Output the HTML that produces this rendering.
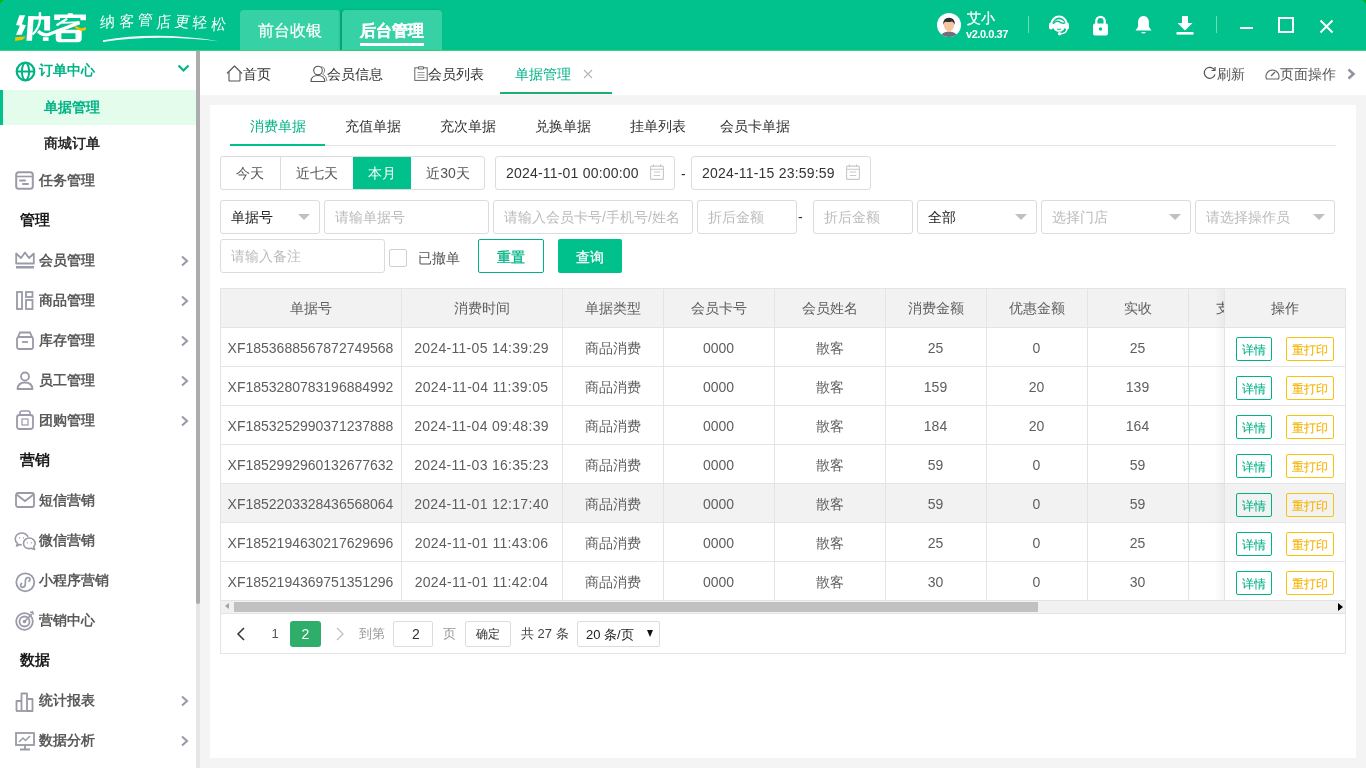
<!DOCTYPE html>
<html><head><meta charset="utf-8">
<style>
*{box-sizing:border-box;margin:0;padding:0}
html,body{width:1366px;height:768px;overflow:hidden;background:#f4f4f4;font-family:"Liberation Sans",sans-serif;font-size:14px;color:#333}
.abs{position:absolute}
#hdr{position:absolute;left:0;top:0;width:1366px;height:51px;background:#01c18c;border-bottom:1px solid #3fd27a}
.htab{position:absolute;top:10px;height:40px;background:#36d1a5;border-radius:4px 4px 0 0;color:#fff;font-size:16px;text-align:center;line-height:42px}
#side{position:absolute;left:0;top:51px;width:196px;height:717px;background:#fff}
#sbar{position:absolute;left:196px;top:51px;width:4px;height:553px;background:#acacac;border-radius:0 0 2px 2px}
#sbtrack{position:absolute;left:196px;top:51px;width:4px;height:717px;background:#e6e6e6}
.mi{position:absolute;left:0;width:196px;height:35px}
.mi .t{position:absolute;left:39px;font-size:14px;color:#555;font-weight:bold;white-space:nowrap}
.mi svg{position:absolute}
.sec{position:absolute;left:20px;font-size:15px;color:#222;font-weight:bold}
.arr{position:absolute;left:180px}
#tabbar{position:absolute;left:200px;top:51px;width:1166px;height:44px;background:#fff}
.tb{position:absolute;top:15px;font-size:14px;color:#333;white-space:nowrap}
#card{position:absolute;left:210px;top:105px;width:1146px;height:653px;background:#fff}
.st{position:absolute;top:14px;font-size:14px;color:#333;white-space:nowrap}
.inp{position:absolute;height:34px;border:1px solid #dcdcdc;border-radius:3px;background:#fff;font-size:14px;line-height:32px;padding-left:10px;color:#bbb;white-space:nowrap;overflow:hidden}
.tri{position:absolute;width:0;height:0;border-left:6px solid transparent;border-right:6px solid transparent;border-top:6px solid #c0c0c0}
</style></head><body><div style="position:absolute;left:0;top:0;width:1366px;height:768px;will-change:transform">
<div id="hdr">
  <svg class="abs" style="left:0;top:0" width="5" height="5"><path d="M0 0 H4 Q1 1 0 4Z" fill="#00b400"/></svg>
  <svg class="abs" style="left:1361px;top:0" width="5" height="5"><path d="M5 0 H1 Q4 1 5 4Z" fill="#00b400"/></svg>
    <svg class="abs" style="left:0;top:0" width="95" height="50" viewBox="0 0 95 50">
<g fill="#fff">
<path d="M19.4 15.2 L25.1 15.2 L21.9 24.3 L25.9 25.3 L21.7 34.7 L16 34.7 L19.9 25.8 L16 25.1 Z"/>
<path d="M28.3 16.2 L33.8 16.2 L32 40.7 L26.4 40.7 Z"/>
<path d="M28.3 16.2 H50.1 V19.6 H28.3 Z"/>
<path d="M44.2 16.2 H50.1 V30.5 H44.2 Z"/>
<path d="M38.7 12.2 H41.2 V19.6 H38.7 Z"/>
<path d="M42.9 37.2 H48.6 V40.9 H42.9 Z"/>
<path d="M54.2 14.4 H85.9 V20.3 H80.4 V17.9 H59.9 V20.1 H54.2 Z"/>
<path d="M67.8 13.2 H72.8 V15 H67.8 Z"/>
<path fill-rule="evenodd" d="M55.7 29.8 H81.7 V38.5 Q81.7 42.2 78 42.2 H59.4 Q55.7 42.2 55.7 38.5 Z M61.4 33.2 V38.9 H75.5 V33.2 Z"/>
</g>
<g stroke="#fff" fill="none">
<path d="M40 19.5 Q39.5 28 32.5 34.5" stroke-width="2.3"/>
<path d="M38.2 31.2 Q43.5 37 50.5 33.8 L79.5 22.6" stroke-width="3.3"/>
<path d="M57.4 24.8 L66.4 19.3" stroke-width="2.3" stroke-linecap="round"/>
<path d="M62 22.8 L79.5 22.2" stroke-width="1.8"/>
</g>
<path d="M15.2 37.3 L25.4 36.4 Q24.5 39.6 19.5 40.3 L15.2 40.9 Z" fill="#f7c000"/>
<path d="M73.7 26.5 Q77 25.6 80 28 Q83 28.6 85.9 27 V29.8 Q84 31.2 80.5 30.8 Q77 30 73.7 26.5Z" fill="#f7c000"/>
</svg>
  <div class="abs" style="left:100px;top:13px;width:16px;font-family:'Liberation Serif',serif;font-size:15px;line-height:18px;color:#fff;font-weight:300;transform:rotate(-8deg) skewX(-8deg)">纳</div><div class="abs" style="left:119px;top:12px;width:16px;font-family:'Liberation Serif',serif;font-size:15px;line-height:18px;color:#fff;font-weight:300;transform:rotate(-4deg) skewX(-8deg)">客</div><div class="abs" style="left:138px;top:11px;width:16px;font-family:'Liberation Serif',serif;font-size:15px;line-height:18px;color:#fff;font-weight:300;transform:rotate(0deg) skewX(-8deg)">管</div><div class="abs" style="left:156px;top:13px;width:16px;font-family:'Liberation Serif',serif;font-size:15px;line-height:18px;color:#fff;font-weight:300;transform:rotate(-6deg) skewX(-8deg)">店</div><div class="abs" style="left:175px;top:13px;width:16px;font-family:'Liberation Serif',serif;font-size:15px;line-height:18px;color:#fff;font-weight:300;transform:rotate(4deg) skewX(-8deg)">更</div><div class="abs" style="left:192px;top:14px;width:16px;font-family:'Liberation Serif',serif;font-size:15px;line-height:18px;color:#fff;font-weight:300;transform:rotate(-3deg) skewX(-8deg)">轻</div><div class="abs" style="left:211px;top:15px;width:16px;font-family:'Liberation Serif',serif;font-size:15px;line-height:18px;color:#fff;font-weight:300;transform:rotate(-5deg) skewX(-8deg)">松</div>
  <svg class="abs" style="left:0;top:0" width="230" height="48" viewBox="0 0 230 48"><path d="M103 40.2 Q158 30.8 219 41.3 Q158 33.8 103 41.9 Z" fill="#f2fffa"/></svg>
  <div class="htab" style="left:240px;width:100px;-webkit-text-stroke:0.2px #fff">前台收银</div>
  <div class="htab" style="left:342px;width:100px;font-weight:bold;box-shadow:-2px 0 2px rgba(0,60,40,0.25);-webkit-text-stroke:0.3px #fff">后台管理<div class="abs" style="left:18px;top:33px;width:64px;height:3px;background:#fff"></div></div>
  <svg class="abs" style="left:937px;top:13px" width="24" height="24" viewBox="0 0 24 24"><defs><clipPath id="avc"><circle cx="12" cy="12" r="12"/></clipPath></defs><circle cx="12" cy="12" r="12" fill="#fff"/><g clip-path="url(#avc)"><path d="M3 25 Q4 19 12 18.5 Q20 19 21 25Z" fill="#6f6f80"/><rect x="10" y="15" width="4" height="4" fill="#f0c29a"/><ellipse cx="12" cy="12" rx="5.2" ry="6" fill="#f3c6a0"/><path d="M6.3 12 Q5.5 5 12 4.8 Q18.5 5 17.7 12 Q17 9 15 8.5 Q12 9.5 8 8.8 Q6.8 10 6.3 12Z" fill="#2f3033"/></g></svg>
  <div class="abs" style="left:967px;top:9px;font-size:14px;color:#fff;line-height:18px;-webkit-text-stroke:0.3px #fff">艾小</div>
  <div class="abs" style="left:966px;top:28px;font-size:11px;color:#fff;font-weight:bold;line-height:13px;letter-spacing:-0.45px">v2.0.0.37</div>
  <div class="abs" style="left:1028px;top:16px;width:1px;height:17px;background:#6fdcb8"></div>
  <svg class="abs" style="left:1048px;top:13px" width="22" height="23" viewBox="0 0 22 23"><path d="M3.5 11 A7.5 7.5 0 0 1 18.5 11" stroke="#fff" stroke-width="2" fill="none"/><rect x="1" y="9.5" width="4" height="7" rx="2" fill="#fff"/><rect x="17" y="9.5" width="4" height="7" rx="2" fill="#fff"/><circle cx="11" cy="12.5" r="6.3" fill="#fff"/><path d="M5.2 11 Q7 7.5 11 8.5 Q13 10.5 16.8 10.2" stroke="#01c18c" stroke-width="1.3" fill="none"/><path d="M9 16 Q11 17 13 16" stroke="#01c18c" stroke-width="1" fill="none"/><path d="M19 16 Q18.5 20.5 12.5 20.8" stroke="#fff" stroke-width="1.5" fill="none"/><circle cx="11.5" cy="20.8" r="1.7" fill="#fff"/></svg>
  <svg class="abs" style="left:1092px;top:15px" width="17" height="21" viewBox="0 0 17 21"><path d="M4.3 9 V6 A4.2 4.2 0 0 1 12.7 6 V9" stroke="#fff" stroke-width="2.3" fill="none"/><rect x="1" y="8.5" width="15" height="12" rx="2" fill="#fff"/><circle cx="8.5" cy="14" r="1.7" fill="#01c18c"/></svg>
  <svg class="abs" style="left:1135px;top:15px" width="17" height="20" viewBox="0 0 17 20"><path d="M8.5 1 C4 1 3 5 3 8 V12 L0.5 15.5 H16.5 L14 12 V8 C14 5 13 1 8.5 1Z" fill="#fff"/><path d="M6 17 Q8.5 20 11 17" fill="#fff"/></svg>
  <svg class="abs" style="left:1176px;top:16px" width="18" height="19" viewBox="0 0 18 19"><path d="M6 0 H12 V7 H16.5 L9 14.5 L1.5 7 H6Z" fill="#fff"/><rect x="0.5" y="16" width="17" height="2.6" fill="#fff"/></svg>
  <div class="abs" style="left:1216px;top:16px;width:1px;height:17px;background:#6fdcb8"></div>
  <div class="abs" style="left:1240px;top:27px;width:13px;height:2px;background:#fff"></div>
  <div class="abs" style="left:1278px;top:17px;width:16px;height:16px;border:2px solid #fff"></div>
  <svg class="abs" style="left:1319px;top:19px" width="15" height="15" viewBox="0 0 15 15"><path d="M1.5 1.5 L13.5 13.5 M13.5 1.5 L1.5 13.5" stroke="#fff" stroke-width="2"/></svg>
</div>
<div id="side"><svg class="abs" style="left:15px;top:10px" width="21" height="21" viewBox="0 0 21 21"><circle cx="10.5" cy="10.5" r="8.8" stroke="#00b386" stroke-width="2.2" fill="none"/><ellipse cx="10.5" cy="10.5" rx="3.6" ry="8.8" stroke="#00b386" stroke-width="2" fill="none"/><path d="M2 10.5 H19" stroke="#00b386" stroke-width="2"/></svg>
<div class="abs" style="left:39px;top:9px;font-size:14px;font-weight:bold;color:#00b386;line-height:20px">订单中心</div>
<svg class="abs" style="left:177px;top:13px" width="13" height="9" viewBox="0 0 13 9"><path d="M1.5 1.5 L6.5 6.5 L11.5 1.5" stroke="#00b386" stroke-width="2.2" fill="none"/></svg>
<div class="abs" style="left:0;top:39px;width:196px;height:35px;background:#e3fceb"><div class="abs" style="left:0;top:0;width:3px;height:35px;background:#00c18c"></div><div class="abs" style="left:44px;top:7px;font-size:14px;font-weight:bold;color:#00b386;line-height:20px">单据管理</div></div>
<div class="abs" style="left:44px;top:82px;font-size:14px;font-weight:bold;color:#2a2a2a;line-height:20px">商城订单</div>
<div class="abs" style="left:0;top:115px;width:196px;height:30px"><svg class="abs" style="left:15px;top:5px" width="19" height="19" viewBox="0 0 19 19"><rect x="1.2" y="1.2" width="16.6" height="16.6" rx="2.5" stroke="#9a9aa8" stroke-width="2" fill="none"/><path d="M1.5 5.5 H17.5" stroke="#9a9aa8" stroke-width="1.6"/><path d="M5 9.5 H10 M8 13 H13" stroke="#9a9aa8" stroke-width="2" stroke-linecap="round"/></svg><div class="abs" style="left:39px;top:4px;font-size:14px;font-weight:bold;color:#5a5a5a;line-height:20px">任务管理</div></div>
<div class="abs" style="left:20px;top:159px;font-size:15px;font-weight:bold;color:#1a1a1a;line-height:20px">管理</div>
<div class="abs" style="left:0;top:195px;width:196px;height:30px"><svg class="abs" style="left:15px;top:5px" width="20" height="18" viewBox="0 0 20 18"><path d="M1.2 12.5 V2.5 L6 7 L10 1.5 L14 7 L18.8 2.5 V12.5Z" stroke="#9a9aa8" stroke-width="1.8" fill="none" stroke-linejoin="round"/><rect x="1" y="15" width="18" height="2.5" fill="#9a9aa8"/></svg><div class="abs" style="left:39px;top:4px;font-size:14px;font-weight:bold;color:#5a5a5a;line-height:20px">会员管理</div><svg class="abs" style="left:179px;top:9px" width="10" height="12" viewBox="0 0 10 12"><path d="M3 1.5 L8 6 L3 10.5" stroke="#9a9aa8" stroke-width="2.1" fill="none"/></svg></div>
<div class="abs" style="left:0;top:235px;width:196px;height:30px"><svg class="abs" style="left:16px;top:5px" width="18" height="19" viewBox="0 0 18 19"><rect x="1" y="1" width="5" height="17" stroke="#9a9aa8" stroke-width="1.8" fill="none"/><rect x="10" y="1" width="6.5" height="5" stroke="#9a9aa8" stroke-width="1.8" fill="none"/><rect x="10" y="9" width="6.5" height="9" stroke="#9a9aa8" stroke-width="1.8" fill="none"/></svg><div class="abs" style="left:39px;top:4px;font-size:14px;font-weight:bold;color:#5a5a5a;line-height:20px">商品管理</div><svg class="abs" style="left:179px;top:9px" width="10" height="12" viewBox="0 0 10 12"><path d="M3 1.5 L8 6 L3 10.5" stroke="#9a9aa8" stroke-width="2.1" fill="none"/></svg></div>
<div class="abs" style="left:0;top:275px;width:196px;height:30px"><svg class="abs" style="left:16px;top:5px" width="18" height="19" viewBox="0 0 18 19"><path d="M2 6 L4 1.5 H14 L16 6" stroke="#9a9aa8" stroke-width="1.8" fill="none"/><rect x="1" y="6" width="16" height="12" rx="2" stroke="#9a9aa8" stroke-width="1.8" fill="none"/><path d="M6 11 H12" stroke="#9a9aa8" stroke-width="1.8"/></svg><div class="abs" style="left:39px;top:4px;font-size:14px;font-weight:bold;color:#5a5a5a;line-height:20px">库存管理</div><svg class="abs" style="left:179px;top:9px" width="10" height="12" viewBox="0 0 10 12"><path d="M3 1.5 L8 6 L3 10.5" stroke="#9a9aa8" stroke-width="2.1" fill="none"/></svg></div>
<div class="abs" style="left:0;top:315px;width:196px;height:30px"><svg class="abs" style="left:16px;top:5px" width="18" height="19" viewBox="0 0 18 19"><circle cx="9" cy="5.5" r="4" stroke="#9a9aa8" stroke-width="1.8" fill="none"/><path d="M1.5 18 Q2 11.5 9 11.5 Q16 11.5 16.5 18Z" stroke="#9a9aa8" stroke-width="1.8" fill="none" stroke-linejoin="round"/></svg><div class="abs" style="left:39px;top:4px;font-size:14px;font-weight:bold;color:#5a5a5a;line-height:20px">员工管理</div><svg class="abs" style="left:179px;top:9px" width="10" height="12" viewBox="0 0 10 12"><path d="M3 1.5 L8 6 L3 10.5" stroke="#9a9aa8" stroke-width="2.1" fill="none"/></svg></div>
<div class="abs" style="left:0;top:355px;width:196px;height:30px"><svg class="abs" style="left:16px;top:4px" width="18" height="20" viewBox="0 0 18 20"><path d="M4 5 V3 Q4 1 6 1 H12 Q14 1 14 3 V5" stroke="#9a9aa8" stroke-width="1.6" fill="none"/><rect x="1" y="5" width="16" height="14" rx="2.5" stroke="#9a9aa8" stroke-width="1.8" fill="none"/><rect x="6" y="9" width="6" height="6" stroke="#9a9aa8" stroke-width="1.2" fill="none"/></svg><div class="abs" style="left:39px;top:4px;font-size:14px;font-weight:bold;color:#5a5a5a;line-height:20px">团购管理</div><svg class="abs" style="left:179px;top:9px" width="10" height="12" viewBox="0 0 10 12"><path d="M3 1.5 L8 6 L3 10.5" stroke="#9a9aa8" stroke-width="2.1" fill="none"/></svg></div>
<div class="abs" style="left:20px;top:399px;font-size:15px;font-weight:bold;color:#1a1a1a;line-height:20px">营销</div>
<div class="abs" style="left:0;top:435px;width:196px;height:30px"><svg class="abs" style="left:15px;top:6px" width="20" height="16" viewBox="0 0 20 16"><rect x="1" y="1" width="18" height="14" rx="2" stroke="#9a9aa8" stroke-width="1.8" fill="none"/><path d="M1.5 2.5 L10 9 L18.5 2.5" stroke="#9a9aa8" stroke-width="1.8" fill="none"/></svg><div class="abs" style="left:39px;top:4px;font-size:14px;font-weight:bold;color:#5a5a5a;line-height:20px">短信营销</div></div>
<div class="abs" style="left:0;top:475px;width:196px;height:30px"><svg class="abs" style="left:14px;top:4px" width="23" height="22" viewBox="0 0 23 22"><path d="M14 7 C13 4.5 10.5 3 7.5 3 C4 3 1.2 5.6 1.2 9 C1.2 11 2.2 12.5 3.6 13.6 L2.5 16 L5.8 14.6 C6.4 14.8 7 14.9 7.8 15" stroke="#9a9aa8" stroke-width="1.6" fill="none" stroke-linejoin="round"/><path d="M15.3 8 C12 8 9.5 10.4 9.5 13.3 C9.5 16.3 12 18.6 15.3 18.6 C16 18.6 16.7 18.5 17.3 18.3 L20.6 19.5 L19.6 16.8 C20.6 15.9 21.2 14.7 21.2 13.3 C21.2 10.4 18.6 8 15.3 8Z" stroke="#9a9aa8" stroke-width="1.6" fill="#fff" stroke-linejoin="round"/><path d="M12.8 12.8 H13.8 M16.8 12.8 H17.8 M5 7.8 H6 M9 7.8 H10" stroke="#9a9aa8" stroke-width="1.2"/></svg><div class="abs" style="left:39px;top:4px;font-size:14px;font-weight:bold;color:#5a5a5a;line-height:20px">微信营销</div></div>
<div class="abs" style="left:0;top:515px;width:196px;height:30px"><svg class="abs" style="left:15px;top:6px" width="21" height="21" viewBox="0 0 21 21"><circle cx="10.3" cy="10.3" r="9" stroke="#9a9aa8" stroke-width="1.8" fill="none"/><path d="M6.5 11.5 C4.8 12.8 5.5 15.5 7.8 15.3 C9.5 15.1 10.2 13.8 10.3 12 L10.4 8.8 C10.5 7 11.3 5.6 13 5.5 C15.2 5.4 15.8 8 14 9.3" stroke="#9a9aa8" stroke-width="1.7" fill="none" stroke-linecap="round"/></svg><div class="abs" style="left:39px;top:4px;font-size:14px;font-weight:bold;color:#5a5a5a;line-height:20px">小程序营销</div></div>
<div class="abs" style="left:0;top:555px;width:196px;height:30px"><svg class="abs" style="left:15px;top:5px" width="20" height="20" viewBox="0 0 20 20"><circle cx="9.5" cy="10.5" r="8.3" stroke="#9a9aa8" stroke-width="1.8" fill="none"/><circle cx="9.5" cy="10.5" r="5" stroke="#9a9aa8" stroke-width="1.8" fill="none"/><circle cx="9.5" cy="10.5" r="1.8" fill="#9a9aa8"/><path d="M9.5 10.5 L17 3 M15 1.5 L17.5 1 L18.5 3.5" stroke="#9a9aa8" stroke-width="1.6" fill="none"/></svg><div class="abs" style="left:39px;top:4px;font-size:14px;font-weight:bold;color:#5a5a5a;line-height:20px">营销中心</div></div>
<div class="abs" style="left:20px;top:599px;font-size:15px;font-weight:bold;color:#1a1a1a;line-height:20px">数据</div>
<div class="abs" style="left:0;top:635px;width:196px;height:30px"><svg class="abs" style="left:15px;top:6px" width="20" height="20" viewBox="0 0 20 20"><path d="M1.5 19 V9 H6.5 V19 M6.5 19 V1.5 H12 V19 M12 19 V7 H17.5 V19 Z" stroke="#9a9aa8" stroke-width="1.8" fill="none" stroke-linejoin="round"/><path d="M1 19 H18" stroke="#9a9aa8" stroke-width="1.8"/></svg><div class="abs" style="left:39px;top:4px;font-size:14px;font-weight:bold;color:#5a5a5a;line-height:20px">统计报表</div><svg class="abs" style="left:179px;top:9px" width="10" height="12" viewBox="0 0 10 12"><path d="M3 1.5 L8 6 L3 10.5" stroke="#9a9aa8" stroke-width="2.1" fill="none"/></svg></div>
<div class="abs" style="left:0;top:675px;width:196px;height:30px"><svg class="abs" style="left:15px;top:6px" width="20" height="19" viewBox="0 0 20 19"><rect x="1" y="1" width="18" height="12" stroke="#9a9aa8" stroke-width="1.8" fill="none"/><path d="M4 10 L8 6 L10.5 8.5 L15 4" stroke="#9a9aa8" stroke-width="1.5" fill="none"/><path d="M10 13 V17 M5 17.5 H15" stroke="#9a9aa8" stroke-width="1.8"/></svg><div class="abs" style="left:39px;top:4px;font-size:14px;font-weight:bold;color:#5a5a5a;line-height:20px">数据分析</div><svg class="abs" style="left:179px;top:9px" width="10" height="12" viewBox="0 0 10 12"><path d="M3 1.5 L8 6 L3 10.5" stroke="#9a9aa8" stroke-width="2.1" fill="none"/></svg></div></div>
<div id="sbtrack"></div>
<div id="sbar"></div>
<div id="tabbar">
  <svg class="abs" style="left:26px;top:14px" width="17" height="17" viewBox="0 0 17 17"><path d="M1 8.5 L8.5 1 L16 8.5" stroke="#555" stroke-width="1.1" fill="none" stroke-linejoin="round"/><path d="M3 7 V15.5 Q3 16 3.5 16 H13.5 Q14 16 14 15.5 V7" stroke="#555" stroke-width="1.1" fill="none"/></svg>
  <div class="tb" style="left:43px">首页</div>
  <svg class="abs" style="left:110px;top:14px" width="18" height="17" viewBox="0 0 18 17"><path d="M11.5 1.5 A4 4 0 0 1 12.5 9 Q16.5 10.5 17 16" stroke="#888" stroke-width="1" fill="none"/><circle cx="8" cy="5.5" r="4.3" stroke="#555" stroke-width="1.1" fill="#fff"/><path d="M1 16.5 Q1 10.5 8 10.5 Q14.5 10.5 14.8 16.5Z" stroke="#555" stroke-width="1.1" fill="none" stroke-linejoin="round"/></svg>
  <div class="tb" style="left:127px">会员信息</div>
  <svg class="abs" style="left:214px;top:15px" width="14" height="15" viewBox="0 0 14 15"><rect x="0.8" y="1.8" width="12.4" height="12.6" stroke="#666" stroke-width="1" fill="none"/><path d="M4.5 0.8 H9.5 V3 H4.5Z" stroke="#666" stroke-width="1" fill="#fff"/><path d="M3.5 6.5 H10.5 M3.5 9 H10.5 M3.5 11.5 H10.5" stroke="#999" stroke-width="1"/></svg>
  <div class="tb" style="left:228px">会员列表</div>
  <div class="tb" style="left:315px;color:#00b386">单据管理</div>
  <svg class="abs" style="left:383px;top:18px" width="10" height="10" viewBox="0 0 10 10"><path d="M1 1 L9 9 M9 1 L1 9" stroke="#b5b5b5" stroke-width="1.1"/></svg>
  <div class="abs" style="left:300px;top:41px;width:112px;height:2px;background:#1cb26e"></div>
  <svg class="abs" style="left:1003px;top:15px" width="14" height="14" viewBox="0 0 14 14"><path d="M11.5 4 A5.5 5.5 0 1 0 12 8.5" stroke="#555" stroke-width="1.2" fill="none"/><path d="M12 1 V4.5 H8.5" stroke="#555" stroke-width="1.2" fill="none"/></svg>
  <div class="tb" style="left:1017px;color:#555">刷新</div>
  <svg class="abs" style="left:1065px;top:16px" width="15" height="13" viewBox="0 0 15 13"><path d="M1.5 12 A6.5 6.5 0 1 1 13.5 12Z" stroke="#666" stroke-width="1.1" fill="none"/><path d="M6 9 L10 5" stroke="#666" stroke-width="1.2"/></svg>
  <div class="tb" style="left:1080px;color:#555">页面操作</div>
  <svg class="abs" style="left:1146px;top:17px" width="10" height="12" viewBox="0 0 10 12"><path d="M2.5 1.5 L7.5 6 L2.5 10.5" stroke="#9090a0" stroke-width="2.5" fill="none"/></svg>
</div>
<div id="card"></div>
<div class="abs" style="left:250px;top:116px;font-size:14px;line-height:20px;color:#00b386;white-space:nowrap">消费单据</div>
<div class="abs" style="left:345px;top:116px;font-size:14px;line-height:20px;color:#333;white-space:nowrap">充值单据</div>
<div class="abs" style="left:440px;top:116px;font-size:14px;line-height:20px;color:#333;white-space:nowrap">充次单据</div>
<div class="abs" style="left:535px;top:116px;font-size:14px;line-height:20px;color:#333;white-space:nowrap">兑换单据</div>
<div class="abs" style="left:630px;top:116px;font-size:14px;line-height:20px;color:#333;white-space:nowrap">挂单列表</div>
<div class="abs" style="left:720px;top:116px;font-size:14px;line-height:20px;color:#333;white-space:nowrap">会员卡单据</div>
<div class="abs" style="left:230px;top:145px;width:1106px;height:1px;background:#e4e4e4"></div>
<div class="abs" style="left:230px;top:144px;width:95px;height:2px;background:#00c18c"></div>
<div class="abs" style="left:220px;top:156px;width:265px;height:34px;border:1px solid #dcdcdc;border-radius:3px;background:#fff"></div>
<div class="abs" style="left:280px;top:157px;width:1px;height:32px;background:#dcdcdc"></div>
<div class="abs" style="left:353px;top:157px;width:58px;height:32px;background:#00c18c"></div>
<div class="abs" style="left:220px;top:163px;width:60px;text-align:center;font-size:14px;line-height:20px;color:#555">今天</div>
<div class="abs" style="left:280px;top:163px;width:73px;text-align:center;font-size:14px;line-height:20px;color:#555">近七天</div>
<div class="abs" style="left:353px;top:163px;width:58px;text-align:center;font-size:14px;line-height:20px;color:#fff">本月</div>
<div class="abs" style="left:411px;top:163px;width:74px;text-align:center;font-size:14px;line-height:20px;color:#555">近30天</div>
<div class="inp" style="left:495px;top:156px;width:180px;color:#333;letter-spacing:0.2px">2024-11-01 00:00:00</div><svg class="abs" style="left:650px;top:164px" width="15" height="16" viewBox="0 0 15 16"><rect x="0.6" y="2.1" width="12.8" height="13.3" rx="1" stroke="#c8c8c8" stroke-width="1.1" fill="none"/><path d="M0.6 5.3 H13.4 M3.8 8 H10.2 M3.8 11.5 H10.2 M3.5 0.3 V3 M10.5 0.3 V3" stroke="#c8c8c8" stroke-width="1"/></svg>
<div class="abs" style="left:681px;top:164px;font-size:14px;line-height:20px;color:#333">-</div>
<div class="inp" style="left:691px;top:156px;width:180px;color:#333;letter-spacing:0.2px">2024-11-15 23:59:59</div><svg class="abs" style="left:846px;top:164px" width="15" height="16" viewBox="0 0 15 16"><rect x="0.6" y="2.1" width="12.8" height="13.3" rx="1" stroke="#c8c8c8" stroke-width="1.1" fill="none"/><path d="M0.6 5.3 H13.4 M3.8 8 H10.2 M3.8 11.5 H10.2 M3.5 0.3 V3 M10.5 0.3 V3" stroke="#c8c8c8" stroke-width="1"/></svg>
<div class="inp" style="left:220px;top:200px;width:100px;color:#222">单据号</div><div class="tri" style="left:298px;top:214px"></div>
<div class="inp" style="left:324px;top:200px;width:165px">请输单据号</div>
<div class="inp" style="left:493px;top:200px;width:200px">请输入会员卡号/手机号/姓名</div>
<div class="inp" style="left:697px;top:200px;width:100px">折后金额</div>
<div class="abs" style="left:798px;top:207px;font-size:14px;line-height:20px;color:#333">-</div>
<div class="inp" style="left:813px;top:200px;width:100px">折后金额</div>
<div class="inp" style="left:917px;top:200px;width:120px;color:#222">全部</div><div class="tri" style="left:1015px;top:214px"></div>
<div class="inp" style="left:1041px;top:200px;width:150px">选择门店</div><div class="tri" style="left:1169px;top:214px"></div>
<div class="inp" style="left:1195px;top:200px;width:140px">请选择操作员</div><div class="tri" style="left:1313px;top:214px"></div>
<div class="inp" style="left:220px;top:239px;width:165px">请输入备注</div>
<div class="abs" style="left:389px;top:249px;width:18px;height:18px;border:1px solid #d0d0d0;border-radius:2px;background:#fff"></div>
<div class="abs" style="left:418px;top:248px;font-size:14px;line-height:20px;color:#555">已撤单</div>
<div class="abs" style="left:478px;top:239px;width:66px;height:34px;border:1px solid #00b386;border-radius:2px;color:#00b386;font-size:14px;line-height:35px;text-align:center;-webkit-text-stroke:0.3px #00b386">重置</div>
<div class="abs" style="left:558px;top:239px;width:64px;height:34px;background:#00c18c;border-radius:2px;color:#fff;font-size:14px;line-height:36px;text-align:center;-webkit-text-stroke:0.3px #fff">查询</div>
<div class="abs" style="left:220px;top:288px;width:1126px;height:366px;border:1px solid #e4e4e4;background:#fff"></div>
<div class="abs" style="left:221px;top:289px;width:1124px;height:38px;background:#f2f2f2"></div>
<div class="abs" style="left:221px;top:484px;width:1124px;height:38px;background:#f2f2f2"></div>
<div class="abs" style="left:220px;top:327px;width:1125px;height:1px;background:#e4e4e4"></div>
<div class="abs" style="left:220px;top:366px;width:1125px;height:1px;background:#e4e4e4"></div>
<div class="abs" style="left:220px;top:405px;width:1125px;height:1px;background:#e4e4e4"></div>
<div class="abs" style="left:220px;top:444px;width:1125px;height:1px;background:#e4e4e4"></div>
<div class="abs" style="left:220px;top:483px;width:1125px;height:1px;background:#e4e4e4"></div>
<div class="abs" style="left:220px;top:522px;width:1125px;height:1px;background:#e4e4e4"></div>
<div class="abs" style="left:220px;top:561px;width:1125px;height:1px;background:#e4e4e4"></div>
<div class="abs" style="left:220px;top:600px;width:1125px;height:1px;background:#e4e4e4"></div>
<div class="abs" style="left:401px;top:288px;width:1px;height:312px;background:#e4e4e4"></div>
<div class="abs" style="left:562px;top:288px;width:1px;height:312px;background:#e4e4e4"></div>
<div class="abs" style="left:663px;top:288px;width:1px;height:312px;background:#e4e4e4"></div>
<div class="abs" style="left:774px;top:288px;width:1px;height:312px;background:#e4e4e4"></div>
<div class="abs" style="left:885px;top:288px;width:1px;height:312px;background:#e4e4e4"></div>
<div class="abs" style="left:986px;top:288px;width:1px;height:312px;background:#e4e4e4"></div>
<div class="abs" style="left:1087px;top:288px;width:1px;height:312px;background:#e4e4e4"></div>
<div class="abs" style="left:1188px;top:288px;width:1px;height:312px;background:#e4e4e4"></div>
<div class="abs" style="left:220px;top:298px;width:181px;text-align:center;font-size:14px;line-height:20px;color:#606060;white-space:nowrap">单据号</div>
<div class="abs" style="left:401px;top:298px;width:161px;text-align:center;font-size:14px;line-height:20px;color:#606060;white-space:nowrap">消费时间</div>
<div class="abs" style="left:562px;top:298px;width:101px;text-align:center;font-size:14px;line-height:20px;color:#606060;white-space:nowrap">单据类型</div>
<div class="abs" style="left:663px;top:298px;width:111px;text-align:center;font-size:14px;line-height:20px;color:#606060;white-space:nowrap">会员卡号</div>
<div class="abs" style="left:774px;top:298px;width:111px;text-align:center;font-size:14px;line-height:20px;color:#606060;white-space:nowrap">会员姓名</div>
<div class="abs" style="left:885px;top:298px;width:101px;text-align:center;font-size:14px;line-height:20px;color:#606060;white-space:nowrap">消费金额</div>
<div class="abs" style="left:986px;top:298px;width:101px;text-align:center;font-size:14px;line-height:20px;color:#606060;white-space:nowrap">优惠金额</div>
<div class="abs" style="left:1087px;top:298px;width:101px;text-align:center;font-size:14px;line-height:20px;color:#606060;white-space:nowrap">实收</div>
<div class="abs" style="left:1188px;top:298px;width:112px;text-align:center;font-size:14px;line-height:20px;color:#606060;white-space:nowrap">支付方式</div>
<div class="abs" style="left:220px;top:338px;width:181px;text-align:center;font-size:14px;line-height:20px;color:#5e5e5e;white-space:nowrap">XF1853688567872749568</div>
<div class="abs" style="left:401px;top:338px;width:161px;text-align:center;font-size:14px;line-height:20px;color:#5e5e5e;white-space:nowrap;letter-spacing:0.3px">2024-11-05 14:39:29</div>
<div class="abs" style="left:562px;top:338px;width:101px;text-align:center;font-size:14px;line-height:20px;color:#5e5e5e;white-space:nowrap">商品消费</div>
<div class="abs" style="left:663px;top:338px;width:111px;text-align:center;font-size:14px;line-height:20px;color:#5e5e5e;white-space:nowrap">0000</div>
<div class="abs" style="left:774px;top:338px;width:111px;text-align:center;font-size:14px;line-height:20px;color:#5e5e5e;white-space:nowrap">散客</div>
<div class="abs" style="left:885px;top:338px;width:101px;text-align:center;font-size:14px;line-height:20px;color:#5e5e5e;white-space:nowrap">25</div>
<div class="abs" style="left:986px;top:338px;width:101px;text-align:center;font-size:14px;line-height:20px;color:#5e5e5e;white-space:nowrap">0</div>
<div class="abs" style="left:1087px;top:338px;width:101px;text-align:center;font-size:14px;line-height:20px;color:#5e5e5e;white-space:nowrap">25</div>
<div class="abs" style="left:1188px;top:338px;width:112px;text-align:center;font-size:14px;line-height:20px;color:#5e5e5e;white-space:nowrap"></div>
<div class="abs" style="left:220px;top:377px;width:181px;text-align:center;font-size:14px;line-height:20px;color:#5e5e5e;white-space:nowrap">XF1853280783196884992</div>
<div class="abs" style="left:401px;top:377px;width:161px;text-align:center;font-size:14px;line-height:20px;color:#5e5e5e;white-space:nowrap;letter-spacing:0.3px">2024-11-04 11:39:05</div>
<div class="abs" style="left:562px;top:377px;width:101px;text-align:center;font-size:14px;line-height:20px;color:#5e5e5e;white-space:nowrap">商品消费</div>
<div class="abs" style="left:663px;top:377px;width:111px;text-align:center;font-size:14px;line-height:20px;color:#5e5e5e;white-space:nowrap">0000</div>
<div class="abs" style="left:774px;top:377px;width:111px;text-align:center;font-size:14px;line-height:20px;color:#5e5e5e;white-space:nowrap">散客</div>
<div class="abs" style="left:885px;top:377px;width:101px;text-align:center;font-size:14px;line-height:20px;color:#5e5e5e;white-space:nowrap">159</div>
<div class="abs" style="left:986px;top:377px;width:101px;text-align:center;font-size:14px;line-height:20px;color:#5e5e5e;white-space:nowrap">20</div>
<div class="abs" style="left:1087px;top:377px;width:101px;text-align:center;font-size:14px;line-height:20px;color:#5e5e5e;white-space:nowrap">139</div>
<div class="abs" style="left:1188px;top:377px;width:112px;text-align:center;font-size:14px;line-height:20px;color:#5e5e5e;white-space:nowrap"></div>
<div class="abs" style="left:220px;top:416px;width:181px;text-align:center;font-size:14px;line-height:20px;color:#5e5e5e;white-space:nowrap">XF1853252990371237888</div>
<div class="abs" style="left:401px;top:416px;width:161px;text-align:center;font-size:14px;line-height:20px;color:#5e5e5e;white-space:nowrap;letter-spacing:0.3px">2024-11-04 09:48:39</div>
<div class="abs" style="left:562px;top:416px;width:101px;text-align:center;font-size:14px;line-height:20px;color:#5e5e5e;white-space:nowrap">商品消费</div>
<div class="abs" style="left:663px;top:416px;width:111px;text-align:center;font-size:14px;line-height:20px;color:#5e5e5e;white-space:nowrap">0000</div>
<div class="abs" style="left:774px;top:416px;width:111px;text-align:center;font-size:14px;line-height:20px;color:#5e5e5e;white-space:nowrap">散客</div>
<div class="abs" style="left:885px;top:416px;width:101px;text-align:center;font-size:14px;line-height:20px;color:#5e5e5e;white-space:nowrap">184</div>
<div class="abs" style="left:986px;top:416px;width:101px;text-align:center;font-size:14px;line-height:20px;color:#5e5e5e;white-space:nowrap">20</div>
<div class="abs" style="left:1087px;top:416px;width:101px;text-align:center;font-size:14px;line-height:20px;color:#5e5e5e;white-space:nowrap">164</div>
<div class="abs" style="left:1188px;top:416px;width:112px;text-align:center;font-size:14px;line-height:20px;color:#5e5e5e;white-space:nowrap"></div>
<div class="abs" style="left:220px;top:455px;width:181px;text-align:center;font-size:14px;line-height:20px;color:#5e5e5e;white-space:nowrap">XF1852992960132677632</div>
<div class="abs" style="left:401px;top:455px;width:161px;text-align:center;font-size:14px;line-height:20px;color:#5e5e5e;white-space:nowrap;letter-spacing:0.3px">2024-11-03 16:35:23</div>
<div class="abs" style="left:562px;top:455px;width:101px;text-align:center;font-size:14px;line-height:20px;color:#5e5e5e;white-space:nowrap">商品消费</div>
<div class="abs" style="left:663px;top:455px;width:111px;text-align:center;font-size:14px;line-height:20px;color:#5e5e5e;white-space:nowrap">0000</div>
<div class="abs" style="left:774px;top:455px;width:111px;text-align:center;font-size:14px;line-height:20px;color:#5e5e5e;white-space:nowrap">散客</div>
<div class="abs" style="left:885px;top:455px;width:101px;text-align:center;font-size:14px;line-height:20px;color:#5e5e5e;white-space:nowrap">59</div>
<div class="abs" style="left:986px;top:455px;width:101px;text-align:center;font-size:14px;line-height:20px;color:#5e5e5e;white-space:nowrap">0</div>
<div class="abs" style="left:1087px;top:455px;width:101px;text-align:center;font-size:14px;line-height:20px;color:#5e5e5e;white-space:nowrap">59</div>
<div class="abs" style="left:1188px;top:455px;width:112px;text-align:center;font-size:14px;line-height:20px;color:#5e5e5e;white-space:nowrap"></div>
<div class="abs" style="left:220px;top:494px;width:181px;text-align:center;font-size:14px;line-height:20px;color:#5e5e5e;white-space:nowrap">XF1852203328436568064</div>
<div class="abs" style="left:401px;top:494px;width:161px;text-align:center;font-size:14px;line-height:20px;color:#5e5e5e;white-space:nowrap;letter-spacing:0.3px">2024-11-01 12:17:40</div>
<div class="abs" style="left:562px;top:494px;width:101px;text-align:center;font-size:14px;line-height:20px;color:#5e5e5e;white-space:nowrap">商品消费</div>
<div class="abs" style="left:663px;top:494px;width:111px;text-align:center;font-size:14px;line-height:20px;color:#5e5e5e;white-space:nowrap">0000</div>
<div class="abs" style="left:774px;top:494px;width:111px;text-align:center;font-size:14px;line-height:20px;color:#5e5e5e;white-space:nowrap">散客</div>
<div class="abs" style="left:885px;top:494px;width:101px;text-align:center;font-size:14px;line-height:20px;color:#5e5e5e;white-space:nowrap">59</div>
<div class="abs" style="left:986px;top:494px;width:101px;text-align:center;font-size:14px;line-height:20px;color:#5e5e5e;white-space:nowrap">0</div>
<div class="abs" style="left:1087px;top:494px;width:101px;text-align:center;font-size:14px;line-height:20px;color:#5e5e5e;white-space:nowrap">59</div>
<div class="abs" style="left:1188px;top:494px;width:112px;text-align:center;font-size:14px;line-height:20px;color:#5e5e5e;white-space:nowrap"></div>
<div class="abs" style="left:220px;top:533px;width:181px;text-align:center;font-size:14px;line-height:20px;color:#5e5e5e;white-space:nowrap">XF1852194630217629696</div>
<div class="abs" style="left:401px;top:533px;width:161px;text-align:center;font-size:14px;line-height:20px;color:#5e5e5e;white-space:nowrap;letter-spacing:0.3px">2024-11-01 11:43:06</div>
<div class="abs" style="left:562px;top:533px;width:101px;text-align:center;font-size:14px;line-height:20px;color:#5e5e5e;white-space:nowrap">商品消费</div>
<div class="abs" style="left:663px;top:533px;width:111px;text-align:center;font-size:14px;line-height:20px;color:#5e5e5e;white-space:nowrap">0000</div>
<div class="abs" style="left:774px;top:533px;width:111px;text-align:center;font-size:14px;line-height:20px;color:#5e5e5e;white-space:nowrap">散客</div>
<div class="abs" style="left:885px;top:533px;width:101px;text-align:center;font-size:14px;line-height:20px;color:#5e5e5e;white-space:nowrap">25</div>
<div class="abs" style="left:986px;top:533px;width:101px;text-align:center;font-size:14px;line-height:20px;color:#5e5e5e;white-space:nowrap">0</div>
<div class="abs" style="left:1087px;top:533px;width:101px;text-align:center;font-size:14px;line-height:20px;color:#5e5e5e;white-space:nowrap">25</div>
<div class="abs" style="left:1188px;top:533px;width:112px;text-align:center;font-size:14px;line-height:20px;color:#5e5e5e;white-space:nowrap"></div>
<div class="abs" style="left:220px;top:572px;width:181px;text-align:center;font-size:14px;line-height:20px;color:#5e5e5e;white-space:nowrap">XF1852194369751351296</div>
<div class="abs" style="left:401px;top:572px;width:161px;text-align:center;font-size:14px;line-height:20px;color:#5e5e5e;white-space:nowrap;letter-spacing:0.3px">2024-11-01 11:42:04</div>
<div class="abs" style="left:562px;top:572px;width:101px;text-align:center;font-size:14px;line-height:20px;color:#5e5e5e;white-space:nowrap">商品消费</div>
<div class="abs" style="left:663px;top:572px;width:111px;text-align:center;font-size:14px;line-height:20px;color:#5e5e5e;white-space:nowrap">0000</div>
<div class="abs" style="left:774px;top:572px;width:111px;text-align:center;font-size:14px;line-height:20px;color:#5e5e5e;white-space:nowrap">散客</div>
<div class="abs" style="left:885px;top:572px;width:101px;text-align:center;font-size:14px;line-height:20px;color:#5e5e5e;white-space:nowrap">30</div>
<div class="abs" style="left:986px;top:572px;width:101px;text-align:center;font-size:14px;line-height:20px;color:#5e5e5e;white-space:nowrap">0</div>
<div class="abs" style="left:1087px;top:572px;width:101px;text-align:center;font-size:14px;line-height:20px;color:#5e5e5e;white-space:nowrap">30</div>
<div class="abs" style="left:1188px;top:572px;width:112px;text-align:center;font-size:14px;line-height:20px;color:#5e5e5e;white-space:nowrap"></div>
<div class="abs" style="left:1214px;top:289px;width:10px;height:311px;background:linear-gradient(to right,rgba(0,0,0,0),rgba(0,0,0,0.035))"></div>
<div class="abs" style="left:1224px;top:288px;width:122px;height:313px;border-left:1px solid #e4e4e4;border-top:1px solid #e4e4e4;border-right:1px solid #e4e4e4;background:#fff"></div>
<div class="abs" style="left:1225px;top:289px;width:120px;height:38px;background:#f2f2f2"></div>
<div class="abs" style="left:1225px;top:484px;width:120px;height:38px;background:#f2f2f2"></div>
<div class="abs" style="left:1224px;top:327px;width:121px;height:1px;background:#e4e4e4"></div>
<div class="abs" style="left:1224px;top:366px;width:121px;height:1px;background:#e4e4e4"></div>
<div class="abs" style="left:1224px;top:405px;width:121px;height:1px;background:#e4e4e4"></div>
<div class="abs" style="left:1224px;top:444px;width:121px;height:1px;background:#e4e4e4"></div>
<div class="abs" style="left:1224px;top:483px;width:121px;height:1px;background:#e4e4e4"></div>
<div class="abs" style="left:1224px;top:522px;width:121px;height:1px;background:#e4e4e4"></div>
<div class="abs" style="left:1224px;top:561px;width:121px;height:1px;background:#e4e4e4"></div>
<div class="abs" style="left:1224px;top:600px;width:121px;height:1px;background:#e4e4e4"></div>
<div class="abs" style="left:1224px;top:298px;width:121px;text-align:center;font-size:14px;line-height:20px;color:#555">操作</div>
<div class="abs" style="left:1236px;top:337px;width:36px;height:24px;border:1px solid #00b386;border-radius:2px;color:#00b386;font-size:12px;line-height:24px;text-align:center;-webkit-text-stroke:0.1px #00b386">详情</div>
<div class="abs" style="left:1286px;top:337px;width:48px;height:24px;border:1px solid #f8c210;border-radius:2px;color:#f5b400;font-size:12px;line-height:24px;text-align:center;-webkit-text-stroke:0.1px #f5b400">重打印</div>
<div class="abs" style="left:1236px;top:376px;width:36px;height:24px;border:1px solid #00b386;border-radius:2px;color:#00b386;font-size:12px;line-height:24px;text-align:center;-webkit-text-stroke:0.1px #00b386">详情</div>
<div class="abs" style="left:1286px;top:376px;width:48px;height:24px;border:1px solid #f8c210;border-radius:2px;color:#f5b400;font-size:12px;line-height:24px;text-align:center;-webkit-text-stroke:0.1px #f5b400">重打印</div>
<div class="abs" style="left:1236px;top:415px;width:36px;height:24px;border:1px solid #00b386;border-radius:2px;color:#00b386;font-size:12px;line-height:24px;text-align:center;-webkit-text-stroke:0.1px #00b386">详情</div>
<div class="abs" style="left:1286px;top:415px;width:48px;height:24px;border:1px solid #f8c210;border-radius:2px;color:#f5b400;font-size:12px;line-height:24px;text-align:center;-webkit-text-stroke:0.1px #f5b400">重打印</div>
<div class="abs" style="left:1236px;top:454px;width:36px;height:24px;border:1px solid #00b386;border-radius:2px;color:#00b386;font-size:12px;line-height:24px;text-align:center;-webkit-text-stroke:0.1px #00b386">详情</div>
<div class="abs" style="left:1286px;top:454px;width:48px;height:24px;border:1px solid #f8c210;border-radius:2px;color:#f5b400;font-size:12px;line-height:24px;text-align:center;-webkit-text-stroke:0.1px #f5b400">重打印</div>
<div class="abs" style="left:1236px;top:493px;width:36px;height:24px;border:1px solid #00b386;border-radius:2px;color:#00b386;font-size:12px;line-height:24px;text-align:center;-webkit-text-stroke:0.1px #00b386">详情</div>
<div class="abs" style="left:1286px;top:493px;width:48px;height:24px;border:1px solid #f8c210;border-radius:2px;color:#f5b400;font-size:12px;line-height:24px;text-align:center;-webkit-text-stroke:0.1px #f5b400">重打印</div>
<div class="abs" style="left:1236px;top:532px;width:36px;height:24px;border:1px solid #00b386;border-radius:2px;color:#00b386;font-size:12px;line-height:24px;text-align:center;-webkit-text-stroke:0.1px #00b386">详情</div>
<div class="abs" style="left:1286px;top:532px;width:48px;height:24px;border:1px solid #f8c210;border-radius:2px;color:#f5b400;font-size:12px;line-height:24px;text-align:center;-webkit-text-stroke:0.1px #f5b400">重打印</div>
<div class="abs" style="left:1236px;top:571px;width:36px;height:24px;border:1px solid #00b386;border-radius:2px;color:#00b386;font-size:12px;line-height:24px;text-align:center;-webkit-text-stroke:0.1px #00b386">详情</div>
<div class="abs" style="left:1286px;top:571px;width:48px;height:24px;border:1px solid #f8c210;border-radius:2px;color:#f5b400;font-size:12px;line-height:24px;text-align:center;-webkit-text-stroke:0.1px #f5b400">重打印</div>
<div class="abs" style="left:221px;top:601px;width:1124px;height:12px;background:#f1f1f1"></div>
<div class="abs" style="left:234px;top:602px;width:804px;height:10px;background:#c1c1c1"></div>
<div class="abs" style="left:225px;top:603px;width:0;height:0;border-top:3.5px solid transparent;border-bottom:3.5px solid transparent;border-right:4px solid #a3a3a3"></div>
<div class="abs" style="left:1338px;top:603px;width:0;height:0;border-top:4px solid transparent;border-bottom:4px solid transparent;border-left:5px solid #000"></div>
<div class="abs" style="left:220px;top:613px;width:1126px;height:1px;background:#e4e4e4"></div>
<svg class="abs" style="left:236px;top:627px" width="10" height="14" viewBox="0 0 10 14"><path d="M8 1 L2 7 L8 13" stroke="#333" stroke-width="1.5" fill="none"/></svg>
<div class="abs" style="left:268px;top:624px;width:14px;text-align:center;font-size:13px;line-height:20px;color:#555">1</div>
<div class="abs" style="left:290px;top:621px;width:31px;height:26px;background:#2eae6a;border-radius:3px;color:#fff;font-size:14px;line-height:26px;text-align:center">2</div>
<svg class="abs" style="left:335px;top:627px" width="10" height="14" viewBox="0 0 10 14"><path d="M2 1 L8 7 L2 13" stroke="#c0c0c0" stroke-width="1.3" fill="none"/></svg>
<div class="abs" style="left:359px;top:624px;font-size:13px;line-height:20px;color:#999">到第</div>
<div class="abs" style="left:393px;top:621px;width:40px;height:26px;border:1px solid #dcdcdc;border-radius:2px;text-align:center;font-size:14px;line-height:24px;color:#333;padding-left:6px">2</div>
<div class="abs" style="left:443px;top:624px;font-size:13px;line-height:20px;color:#999">页</div>
<div class="abs" style="left:465px;top:621px;width:46px;height:26px;border:1px solid #dcdcdc;border-radius:2px;text-align:center;font-size:12px;line-height:24px;color:#333">确定</div>
<div class="abs" style="left:521px;top:624px;font-size:13px;line-height:20px;color:#444;white-space:nowrap">共 27 条</div>
<div class="abs" style="left:577px;top:621px;width:83px;height:26px;border:1px solid #dcdcdc;border-radius:2px;font-size:13px;line-height:26px;color:#222;padding-left:8px;white-space:nowrap">20 条/页</div>
<div class="abs" style="left:647px;top:630px;width:0;height:0;border-left:3.5px solid transparent;border-right:3.5px solid transparent;border-top:7px solid #111"></div>
</div></body></html>
